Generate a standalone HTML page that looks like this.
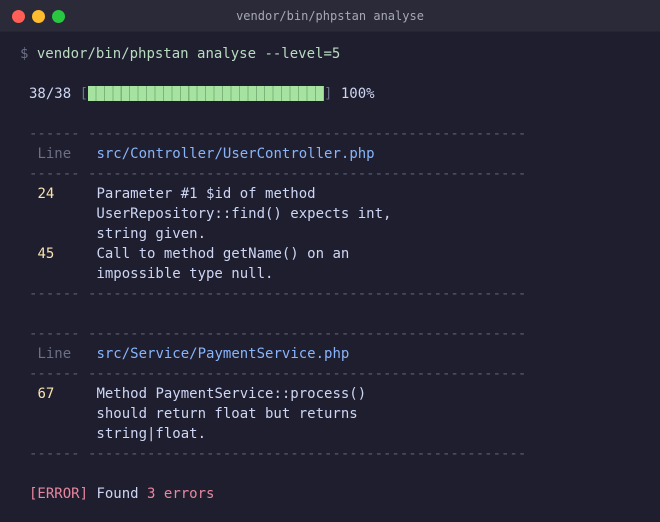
<!DOCTYPE html>
<html><head><meta charset="utf-8"><style>
*{margin:0;padding:0;box-sizing:border-box}
body{width:660px;height:520px;background:#1e1e2e;overflow:hidden;font-family:"DejaVu Sans Mono","Liberation Mono",monospace;font-size:14px;color:#cdd6f4}
.bar{height:32px;background:#2a2a38;position:relative;border-bottom:1px solid #25253a}
.dot{position:absolute;top:10px;width:13px;height:13px;border-radius:50%}
.title{position:absolute;left:0;right:0;top:9px;text-align:center;font-size:12px;color:#a6a8b8}
.c{position:absolute;left:0;top:2px;width:660px;height:520px}
.l{position:absolute;left:29px;height:20px;line-height:20px;white-space:pre}
.d{color:#5c5f75}.y{color:#f9e2af}.b{color:#89b4fa}.g{color:#6c7086}.r{color:#e8879f}
.pb{display:inline-block;width:236px;height:15px;vertical-align:-3px;background:#a6e3a1;background-image:repeating-linear-gradient(90deg,#a6e3a1 0,#a6e3a1 7.4px,#7fb37c 7.4px,#7fb37c 8.44px)}
</style></head><body>
<div class="bar">
<div class="dot" style="left:12px;background:#ff5f57"></div>
<div class="dot" style="left:32px;background:#febc2e"></div>
<div class="dot" style="left:52px;background:#28c840"></div>
<div class="title">vendor/bin/phpstan analyse</div>
</div>
<div class="c">
<div class="l" style="top:42px;left:20px"><span class="g">$</span> <span style="color:#b9dcc0">vendor/bin/phpstan analyse --level=5</span></div>
<div class="l" style="top:82px">38/38 <span class="g">[</span><span class="pb"></span><span class="g">]</span> 100%</div>
<div class="l d" style="top:122px">------ ----------------------------------------------------</div>
<div class="l" style="top:142px"> <span class="g">Line</span>   <span class="b">src/Controller/UserController.php</span></div>
<div class="l d" style="top:162px">------ ----------------------------------------------------</div>
<div class="l" style="top:182px"> <span class="y">24</span>     Parameter #1 $id of method</div>
<div class="l" style="top:202px">        UserRepository::find() expects int,</div>
<div class="l" style="top:222px">        string given.</div>
<div class="l" style="top:242px"> <span class="y">45</span>     Call to method getName() on an</div>
<div class="l" style="top:262px">        impossible type null.</div>
<div class="l d" style="top:282px">------ ----------------------------------------------------</div>
<div class="l d" style="top:322px">------ ----------------------------------------------------</div>
<div class="l" style="top:342px"> <span class="g">Line</span>   <span class="b">src/Service/PaymentService.php</span></div>
<div class="l d" style="top:362px">------ ----------------------------------------------------</div>
<div class="l" style="top:382px"> <span class="y">67</span>     Method PaymentService::process()</div>
<div class="l" style="top:402px">        should return float but returns</div>
<div class="l" style="top:422px">        string|float.</div>
<div class="l d" style="top:442px">------ ----------------------------------------------------</div>
<div class="l" style="top:482px"><span class="r">[ERROR]</span> Found <span class="r">3 errors</span></div>
</div>
</body></html>
